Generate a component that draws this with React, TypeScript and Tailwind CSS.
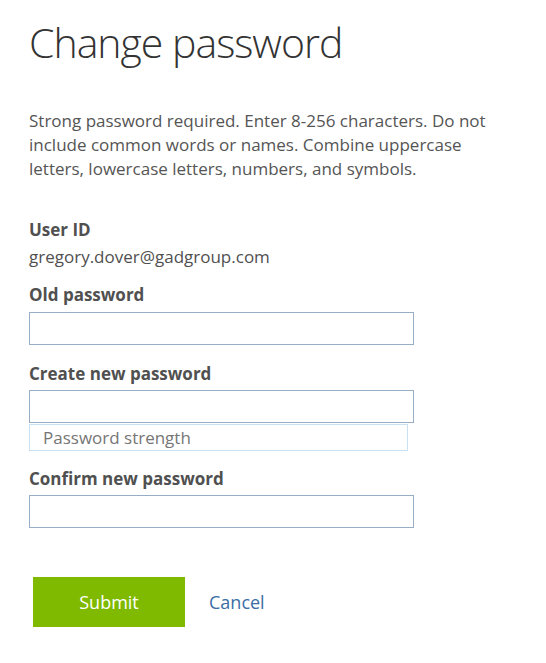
export default function App() {
  return (
    <div className="min-h-screen bg-white px-[29px] pt-[14px] font-['Open_Sans',sans-serif]">
      <h1 className="text-[41px] font-light leading-[56px] text-[#333333] tracking-[-1px]">Change password</h1>

      <p className="mt-[39px] text-[17px] leading-[24px] text-[#555555]">
        Strong password required. Enter 8-256 characters. Do not
        <br />
        include common words or names. Combine uppercase
        <br />
        letters, lowercase letters, numbers, and symbols.
      </p>

      <form className="mt-[37px] text-[17px] text-[#505050]" onSubmit={(e) => e.preventDefault()}>
        <div className="font-bold leading-[24px]">User ID</div>
        <div className="mt-[3px] leading-[24px]">gregory.dover@gadgroup.com</div>

        <label className="mt-[14px] block font-bold leading-[24px]">Old password</label>
        <input type="password" className="mt-[5px] block h-[33px] w-[385px] border border-[#98aec4] bg-white outline-none" />

        <label className="mt-[17px] block font-bold leading-[24px]">Create new password</label>
        <input type="password" className="mt-[4px] block h-[33px] w-[385px] border border-[#98aec4] bg-white outline-none" />
        <div className="mt-px flex h-[27px] w-[379px] items-center border border-[#c7e0f4] pl-[13px] text-[#767676]">
          Password strength
        </div>

        <label className="mt-[16px] block font-bold leading-[24px]">Confirm new password</label>
        <input type="password" className="mt-[4px] block h-[33px] w-[385px] border border-[#98aec4] bg-white outline-none" />

        <div className="mt-[49px] flex items-center gap-[24px] pl-[4px]">
          <button type="submit" className="h-[50px] w-[152px] bg-[#7fba00] text-[18px] text-white">
            Submit
          </button>
          <a href="#" className="text-[18px] text-[#3a6ea5]">Cancel</a>
        </div>
      </form>
    </div>
  );
}
